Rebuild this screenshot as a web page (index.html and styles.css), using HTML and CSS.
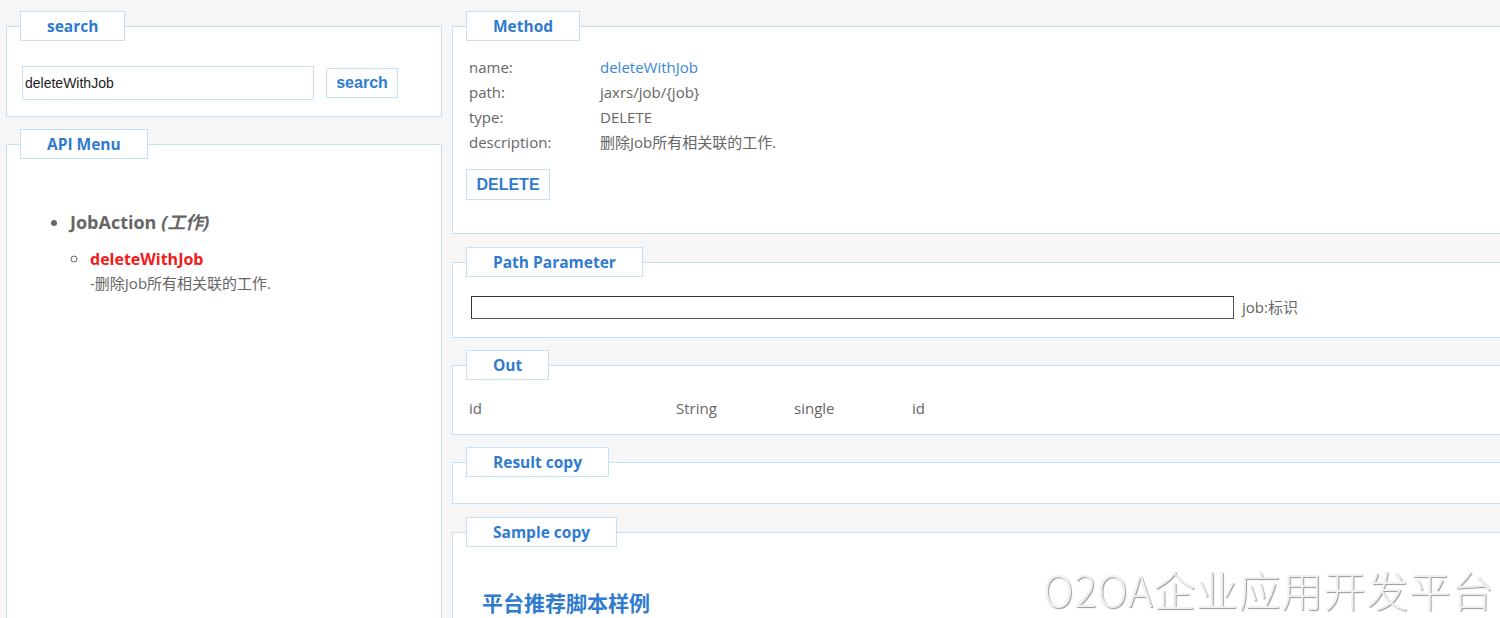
FILE: index.html
```html
<!DOCTYPE html>
<html lang="zh-CN">
<head>
<meta charset="utf-8">
<title>O2OA API</title>
<link rel="stylesheet" href="styles.css">
</head>
<body>
<div class="layout">
  <aside class="sidebar">
    <section class="panel search-panel">
      <div class="legend">search</div>
      <div class="search-row">
        <input class="search-input" type="text" value="deleteWithJob">
        <button class="btn">search</button>
      </div>
    </section>
    <section class="panel menu-panel">
      <div class="legend">API Menu</div>
      <ul class="menu">
        <li class="menu-item">JobAction <em>(工作)</em>
          <ul class="submenu">
            <li><span class="sub-name">deleteWithJob</span><br><span class="sub-desc">-删除Job所有相关联的工作.</span></li>
          </ul>
        </li>
      </ul>
    </section>
  </aside>
  <main class="content">
    <section class="panel method-panel">
      <div class="legend">Method</div>
      <div class="info">
        <div class="info-row"><span class="info-label">name:</span><span class="info-value link">deleteWithJob</span></div>
        <div class="info-row"><span class="info-label">path:</span><span class="info-value">jaxrs/job/{job}</span></div>
        <div class="info-row"><span class="info-label">type:</span><span class="info-value">DELETE</span></div>
        <div class="info-row"><span class="info-label">description:</span><span class="info-value">删除Job所有相关联的工作.</span></div>
      </div>
      <button class="btn method-btn">DELETE</button>
    </section>
    <section class="panel param-panel">
      <div class="legend">Path Parameter</div>
      <div class="param-row">
        <input class="param-input" type="text">
        <span class="param-label">job:标识</span>
      </div>
    </section>
    <section class="panel out-panel">
      <div class="legend">Out</div>
      <div class="out-row">
        <span>id</span><span>String</span><span>single</span><span>id</span>
      </div>
    </section>
    <section class="panel result-panel">
      <div class="legend">Result copy</div>
    </section>
    <section class="panel sample-panel">
      <div class="legend">Sample copy</div>
      <h3 class="sample-title">平台推荐脚本样例</h3>
    </section>
  </main>
</div>
<div class="watermark">O2OA企业应用开发平台</div>
</body>
</html>
```
FILE: styles.css
```css
html, body {
  margin: 0;
  height: 100%;
  overflow: hidden;
}
body {
  background: #f6f6f6;
  font-family: "Open Sans", "Noto Sans CJK SC", sans-serif;
  font-size: 15px;
  color: #666;
}
.layout {
  display: flex;
  align-items: flex-start;
  gap: 10px;
  padding: 26px 0 0 6px;
}
.sidebar {
  width: 436px;
  flex-shrink: 0;
}
.content {
  width: 1100px;
  flex-shrink: 0;
}
.panel {
  box-sizing: border-box;
  border: 1px solid #c6e0f6;
  background: #fff;
}
.legend {
  width: fit-content;
  box-sizing: border-box;
  height: 30px;
  margin: -16px 0 0 13px;
  padding: 0 26px;
  border: 1px solid #c6e0f6;
  background: #fff;
  color: #2f7bd0;
  font-weight: 700;
  font-size: 15.5px;
  line-height: 28px;
}

/* search */
.search-panel {
  padding-bottom: 16px;
}
.search-row {
  display: flex;
  align-items: center;
  margin: 25px 0 0 15px;
}
.search-input {
  box-sizing: border-box;
  width: 292px;
  height: 34px;
  margin: 0;
  padding: 0 2px;
  border: 1px solid #c6e0f6;
  font-family: "Liberation Sans", Arial, sans-serif;
  font-size: 14px;
  color: #222;
  outline: none;
}
.btn {
  box-sizing: border-box;
  height: 31px;
  margin: 0 0 0 12px;
  padding: 0 8px;
  border: 1px solid #c6e0f6;
  background: #fff;
  color: #2f7bd0;
  font-family: "Liberation Sans", Arial, sans-serif;
  font-size: 16px;
  font-weight: 700;
}
.search-row .btn {
  width: 72px;
  height: 30px;
}

/* menu */
.menu-panel {
  margin-top: 27px;
  height: 520px;
}
.menu {
  margin: 49px 0 0;
  padding-left: 63px;
  list-style: disc;
}
.menu-item {
  font-size: 18px;
  font-weight: 700;
  line-height: 28px;
  color: #666;
}
.menu-item em {
  font-style: italic;
}
.submenu {
  margin: 11px 0 0;
  padding-left: 20px;
  list-style: circle;
  line-height: 23px;
}
.sub-name {
  color: #f21a1a;
  font-size: 16px;
  font-weight: 700;
}
.sub-desc {
  font-size: 15px;
  font-weight: 400;
  color: #666;
}

/* method */
.method-panel {
  padding-bottom: 33px;
}
.info {
  margin: 14px 0 0 16px;
}
.info-row {
  display: flex;
  line-height: 25px;
}
.info-label {
  width: 131px;
  flex-shrink: 0;
}
.link {
  color: #3b86d4;
}
.method-btn {
  display: block;
  margin: 14px 0 0 13px;
  width: 84px;
  height: 31px;
}

/* path parameter */
.param-panel {
  margin-top: 28px;
  padding-bottom: 18px;
}
.param-row {
  display: flex;
  align-items: center;
  margin: 19px 0 0 18px;
}
.param-input {
  box-sizing: border-box;
  width: 763px;
  height: 23px;
  margin: 0;
  border: 1px solid #555;
  border-top-color: #333;
  border-left-color: #333;
  outline: none;
}
.param-label {
  margin-left: 8px;
  line-height: 23px;
}

/* out */
.out-panel {
  margin-top: 27px;
  padding-bottom: 13px;
}
.out-row {
  display: grid;
  grid-template-columns: 207px 118px 118px auto;
  margin: 16px 0 0 16px;
  line-height: 25px;
}

/* result */
.result-panel {
  margin-top: 27px;
  padding-bottom: 26px;
}

/* sample */
.sample-panel {
  margin-top: 28px;
  height: 100px;
}
.sample-title {
  margin: 40px 0 0 29px;
  font-family: "Noto Sans CJK SC", sans-serif;
  font-size: 21px;
  font-weight: 700;
  line-height: 30px;
  color: #2f7bd0;
}

.watermark {
  position: fixed;
  right: 6px;
  bottom: 4px;
  font-family: "Noto Sans CJK SC", sans-serif;
  font-weight: 300;
  font-size: 42px;
  line-height: 50px;
  letter-spacing: 0.6px;
  color: #f0f0f0;
  text-shadow: 1px 1px 1px #9a9a9a;
  pointer-events: none;
}
```
